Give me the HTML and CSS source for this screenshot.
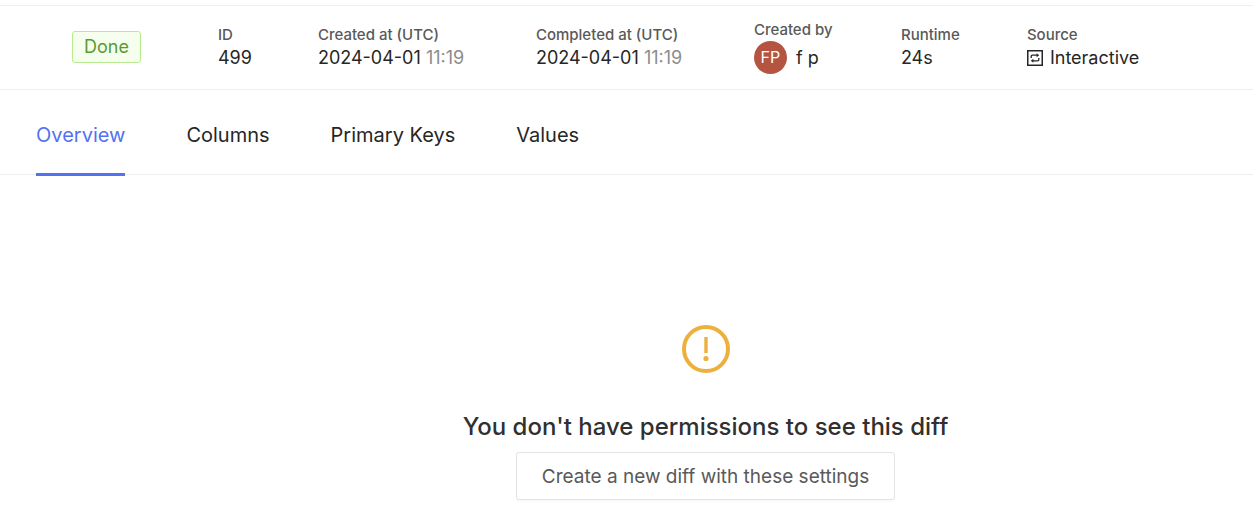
FILE: index.html
```html
<!DOCTYPE html>
<html lang="en">
<head>
  <meta charset="utf-8">
  <meta name="viewport" content="width=device-width, initial-scale=1">
  <title>Diff 499</title>
  <link rel="stylesheet" href="styles.css">
</head>
<body>
  <header class="summary">
    <span class="status">Done</span>
    <dl class="details">
      <div class="detail">
        <dt>ID</dt>
        <dd>499</dd>
      </div>
      <div class="detail">
        <dt>Created at (UTC)</dt>
        <dd>2024-04-01 <span class="time">11:19</span></dd>
      </div>
      <div class="detail">
        <dt>Completed at (UTC)</dt>
        <dd>2024-04-01 <span class="time">11:19</span></dd>
      </div>
      <div class="detail">
        <dt>Created by</dt>
        <dd class="user"><span class="avatar">FP</span>f p</dd>
      </div>
      <div class="detail">
        <dt>Runtime</dt>
        <dd>24s</dd>
      </div>
      <div class="detail">
        <dt>Source</dt>
        <dd class="source">
          <svg class="source-icon" viewBox="0 0 16 16" aria-hidden="true">
            <rect x="0.75" y="0.75" width="14.5" height="14.5" fill="none" stroke="currentColor" stroke-width="1.5"/>
            <path d="M4.2 8V6.2Q4.2 5.2 5.2 5.2H10M11.8 8V9.8Q11.8 10.8 10.8 10.8H6" fill="none" stroke="currentColor" stroke-width="1.3"/>
            <path d="M9.6 3.2L12.2 5.2L9.6 7.2zM6.4 8.8L3.8 10.8L6.4 12.8z" fill="currentColor"/>
          </svg>
          Interactive
        </dd>
      </div>
    </dl>
  </header>

  <nav class="tabs">
    <a class="tab active" href="#overview" aria-current="page">Overview</a>
    <a class="tab" href="#columns">Columns</a>
    <a class="tab" href="#primary-keys">Primary Keys</a>
    <a class="tab" href="#values">Values</a>
  </nav>

  <main class="empty">
    <svg class="warning-icon" viewBox="0 0 48 48" fill="none" aria-hidden="true">
      <circle cx="24" cy="24" r="22" stroke="currentColor" stroke-width="4"/>
      <path d="M22.3 12h3.4v16h-3.4z" fill="currentColor"/>
      <circle cx="24" cy="33.5" r="2.6" fill="currentColor"/>
    </svg>
    <h1>You don't have permissions to see this diff</h1>
    <button class="button" type="button">Create a new diff with these settings</button>
  </main>
</body>
</html>
```

FILE: styles.css
```css
body {
  margin: 0;
  padding-top: 5px;
  font-family: Inter, "Liberation Sans", sans-serif;
  font-size: 18px;
  line-height: 24px;
  color: #262626;
  background: #fff;
}

.summary {
  display: flex;
  align-items: center;
  gap: 77px;
  height: 81px;
  padding: 0 0 2px 72px;
  border-top: 1px solid #eee;
  border-bottom: 1px solid #eee;
}

.status {
  padding: 3px 11px;
  border: 1px solid #b7eb8f;
  border-radius: 3px;
  color: #569c30;
  background: #f6ffed;
}

.details {
  display: grid;
  grid-template-columns: 34px 152px 152px 81px 60px auto;
  align-items: center;
  column-gap: 66px;
  margin: 0;
  white-space: nowrap;
}

dt {
  font-size: 15px;
  font-weight: 500;
  line-height: 22px;
  color: #595959;
}

dd {
  margin: 0;
}

.time {
  color: #8c8c8c;
}

.user,
.source {
  display: flex;
  align-items: center;
}

.user {
  gap: 9px;
}

.avatar {
  width: 33px;
  border-radius: 50%;
  font-size: 16px;
  line-height: 33px;
  text-align: center;
  color: #fff;
  background: #b55440;
}

.source {
  gap: 7px;
}

.source-icon {
  width: 16px;
  height: 16px;
}

.tabs {
  display: flex;
  gap: 61px;
  padding-left: 36px;
  border-bottom: 1px solid #eee;
}

.tab {
  margin-bottom: -2px;
  padding: 33px 0 26px;
  border-bottom: 3px solid transparent;
  font-size: 20px;
  color: inherit;
  text-decoration: none;
}

.tab.active {
  border-color: #5272f2;
  color: #5272f2;
}

.empty {
  display: flex;
  flex-direction: column;
  align-items: center;
  padding: 150px 0 26px 158px;
}

.warning-icon {
  width: 48px;
  height: 48px;
  color: #ecb03c;
}

.empty h1 {
  margin: 37px 0 9px;
  font-size: 24px;
  font-weight: 500;
  line-height: 33px;
  color: #303030;
}

.button {
  padding: 12px 25px 10px;
  border: 1px solid #e3e3e3;
  border-radius: 3px;
  font: inherit;
  font-size: 19px;
  color: #595959;
  background: #fff;
  box-shadow: 0 2px 0 #fafafa;
}
```
